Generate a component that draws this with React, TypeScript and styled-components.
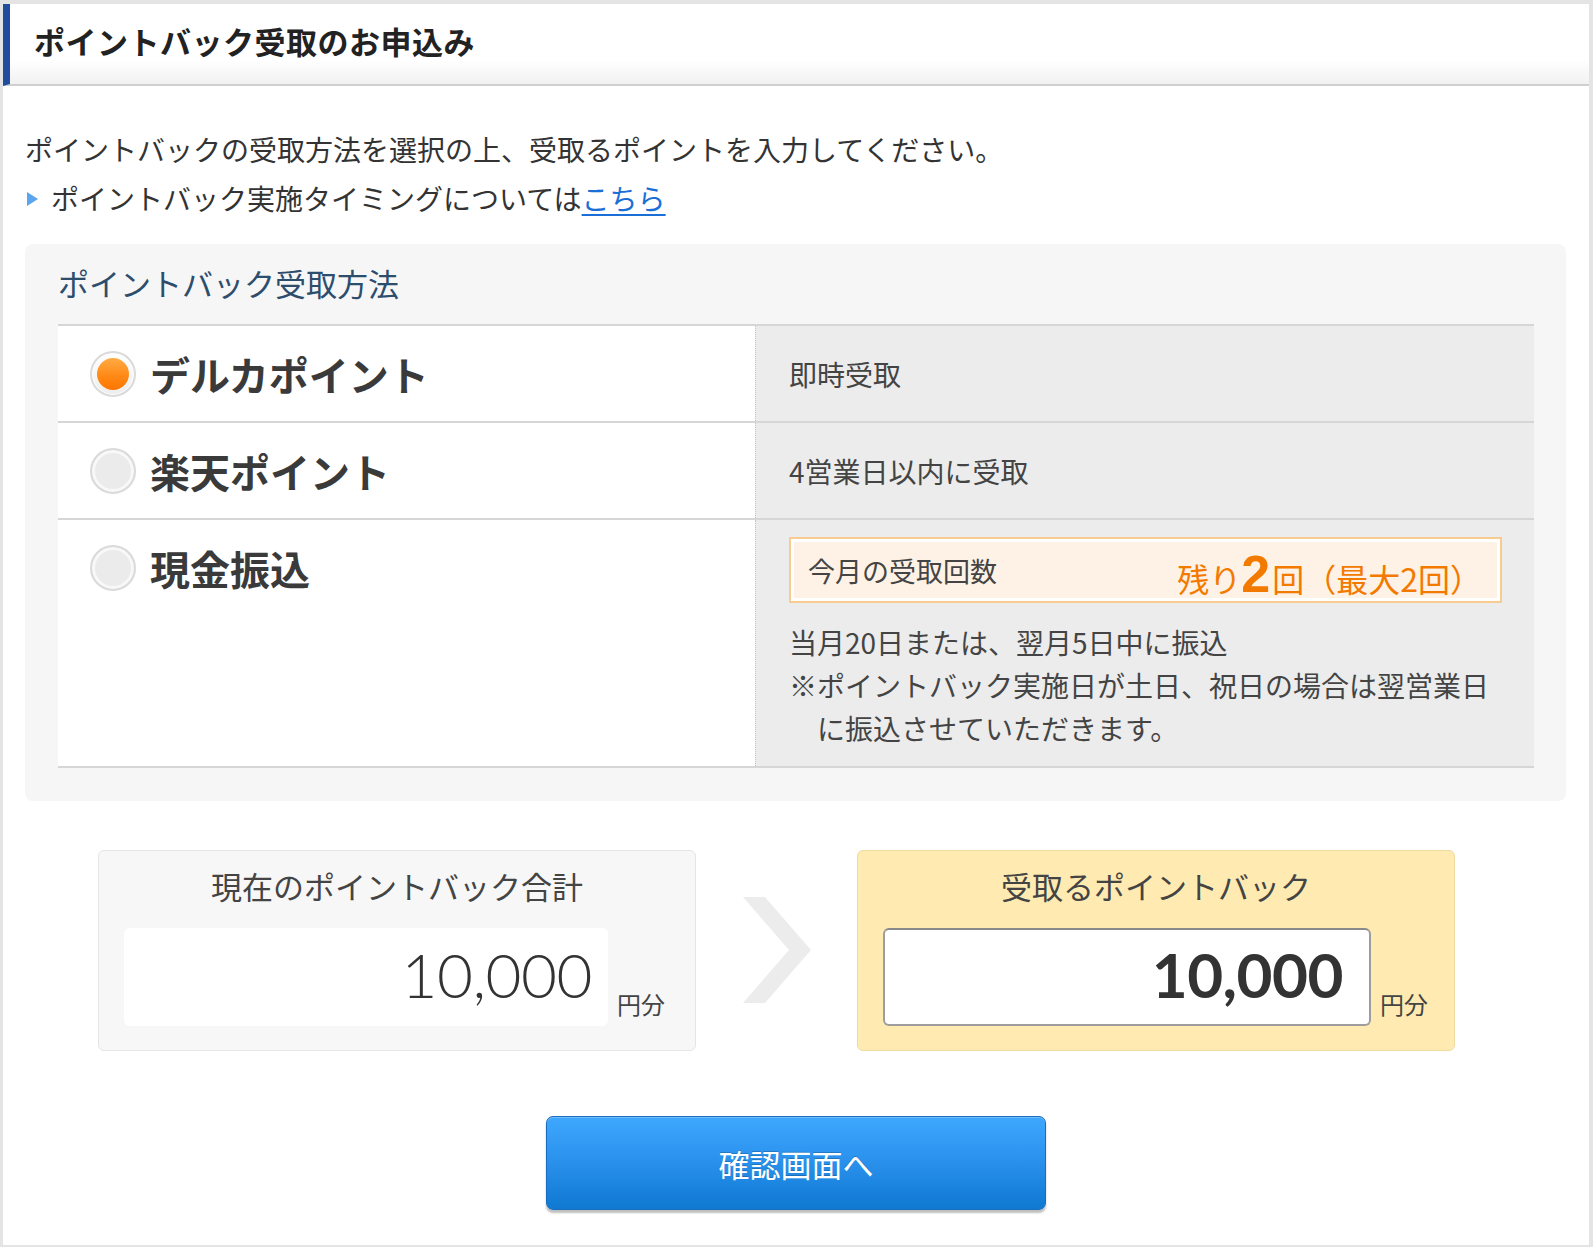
import React from 'react';
import styled, { createGlobalStyle } from 'styled-components';

const GlobalStyle = createGlobalStyle`
  html, body {
    margin: 0;
    padding: 0;
    background: #fff;
  }
  body {
    font-family: 'Noto Sans CJK JP', 'Noto Sans', sans-serif;
    color: #333;
  }
  * {
    box-sizing: border-box;
  }
`;

const methods = [
  { id: 'delca', label: 'デルカポイント', note: '即時受取', checked: true },
  { id: 'rakuten', label: '楽天ポイント', note: '4営業日以内に受取', checked: false },
];

const App: React.FC = () => {
  return (
    <>
      <GlobalStyle />
      <Frame>
        <Header>
          <Title>ポイントバック受取のお申込み</Title>
        </Header>

        <Body>
          <Intro>ポイントバックの受取方法を選択の上、受取るポイントを入力してください。</Intro>
          <Intro>
            <Bullet />
            ポイントバック実施タイミングについては<TextLink href="#">こちら</TextLink>
          </Intro>

          <Panel>
            <PanelTitle>ポイントバック受取方法</PanelTitle>
            <MethodTable>
              {methods.map((m) => (
                <MethodRow key={m.id}>
                  <MethodCell>
                    <Radio checked={m.checked} />
                    <MethodName>{m.label}</MethodName>
                  </MethodCell>
                  <NoteCell $center>{m.note}</NoteCell>
                </MethodRow>
              ))}
              <MethodRow>
                <MethodCell>
                  <Radio checked={false} />
                  <MethodName>現金振込</MethodName>
                </MethodCell>
                <NoteCell>
                  <CountBox>
                    <CountLabel>今月の受取回数</CountLabel>
                    <CountValue>
                      残り<BigNum>2</BigNum>回（最大2回）
                    </CountValue>
                  </CountBox>
                  <NoteText>当月20日または、翌月5日中に振込</NoteText>
                  <NoteText $hanging>
                    ※ポイントバック実施日が土日、祝日の場合は翌営業日
                    <br />
                    に振込させていただきます。
                  </NoteText>
                </NoteCell>
              </MethodRow>
            </MethodTable>
          </Panel>

          <AmountRow>
            <AmountBox $variant="current">
              <AmountTitle>現在のポイントバック合計</AmountTitle>
              <AmountLine>
                <AmountField $variant="current">10,000</AmountField>
                <Unit>円分</Unit>
              </AmountLine>
            </AmountBox>

            <Arrow>
              <svg width="68" height="106" viewBox="0 0 68 106">
                <polygon points="0,0 22,0 68,53 22,106 0,106 46,53" fill="#ececec" />
              </svg>
            </Arrow>

            <AmountBox $variant="receive">
              <AmountTitle>受取るポイントバック</AmountTitle>
              <AmountLine>
                <AmountField $variant="receive">10,000</AmountField>
                <Unit>円分</Unit>
              </AmountLine>
            </AmountBox>
          </AmountRow>

          <ButtonRow>
            <SubmitButton type="button">確認画面へ</SubmitButton>
          </ButtonRow>
        </Body>
      </Frame>
    </>
  );
};

export default App;

const Radio: React.FC<{ checked: boolean }> = ({ checked }) => (
  <RadioOuter $checked={checked}>{checked && <RadioDot />}</RadioOuter>
);

// Styled Components
const Frame = styled.div`
  width: 1593px;
  min-height: 1247px;
  border: 4px solid #e4e4e4;
  border-left-width: 3px;
  background: #fff;
`;

const Header = styled.div`
  height: 82px;
  display: flex;
  align-items: center;
  padding: 0 0 7px 24px;
  border-left: 7px solid #214d9e;
  border-bottom: 2px solid #cfcfcf;
  background: linear-gradient(to bottom, #fff 0%, #fff 70%, #f1f1f1 100%);
`;

const Title = styled.h1`
  margin: 0;
  font-size: 31px;
  font-weight: 700;
  color: #222;
  letter-spacing: 0.5px;
`;

const Body = styled.div`
  padding: 39px 23px 0 22px;
`;

const Intro = styled.p`
  margin: 0;
  display: flex;
  align-items: center;
  font-size: 28px;
  line-height: 49px;
  color: #333;
`;

const Bullet = styled.span`
  display: inline-block;
  width: 0;
  height: 0;
  margin: 0 13px 0 2px;
  border-left: 11px solid #5ba4ee;
  border-top: 7px solid transparent;
  border-bottom: 7px solid transparent;
`;

const TextLink = styled.a`
  color: #1a6fd6;
  text-decoration: underline;
  text-underline-offset: 4px;
`;

const Panel = styled.div`
  margin-top: 21px;
  background: #f6f6f6;
  border-radius: 8px;
  padding: 0 32px 33px 33px;
`;

const PanelTitle = styled.h2`
  margin: 0;
  height: 80px;
  display: flex;
  align-items: center;
  padding-bottom: 4px;
  font-size: 31px;
  font-weight: 400;
  color: #2d4d6d;
`;

const MethodTable = styled.div`
  border-top: 2px solid #d6d6d6;
`;

const MethodRow = styled.div`
  display: grid;
  grid-template-columns: 697px 1fr;
  border-bottom: 2px solid #d6d6d6;
`;

const MethodCell = styled.div`
  display: flex;
  align-items: flex-start;
  gap: 14px;
  padding: 25px 0 24px 32px;
  background: #fff;
`;

const RadioOuter = styled.span<{ $checked: boolean }>`
  flex: none;
  width: 46px;
  height: 46px;
  border-radius: 50%;
  display: flex;
  align-items: center;
  justify-content: center;
  border: 2px solid #dadada;
  background: ${(p) =>
    p.$checked ? 'linear-gradient(to bottom, #ffffff, #ededed)' : '#ebebeb'};
  box-shadow: ${(p) =>
    p.$checked ? 'inset 0 0 0 1px #fff' : 'inset 0 0 0 3px #f8f8f8'};
`;

const RadioDot = styled.span`
  width: 32px;
  height: 32px;
  border-radius: 50%;
  background: linear-gradient(to bottom, #ffab45 0%, #ff8a16 55%, #ff7400 100%);
`;

const MethodName = styled.span`
  font-size: 40px;
  line-height: 46px;
  font-weight: 700;
  color: #3a3a3a;
`;

const NoteCell = styled.div<{ $center?: boolean }>`
  display: flex;
  flex-direction: column;
  justify-content: ${(p) => (p.$center ? 'center' : 'flex-start')};
  padding: ${(p) => (p.$center ? '0 32px 0 33px' : '17px 32px 16px 33px')};
  background: #ececec;
  border-left: 1px dotted #c4c4c4;
  font-size: 28px;
  color: #444;
`;

const CountBox = styled.div`
  height: 66px;
  display: flex;
  align-items: center;
  justify-content: space-between;
  padding: 0 18px 0 17px;
  border: 2px solid #f8cb8e;
  box-shadow: inset 0 0 0 3px #fff;
  background: #fef2e6;
  margin-bottom: 18px;
`;

const CountLabel = styled.span`
  font-size: 27px;
  color: #444;
`;

const CountValue = styled.span`
  font-size: 32px;
  color: #f37a00;
  line-height: 1;
  display: flex;
  align-items: baseline;
  padding-top: 8px;
`;

const BigNum = styled.span`
  font-family: 'Liberation Sans', Arial, sans-serif;
  font-size: 52px;
  font-weight: 700;
  margin: 0 2px 0 0;
`;

const NoteText = styled.p<{ $hanging?: boolean }>`
  margin: 0;
  font-size: 28px;
  line-height: 43px;
  color: #444;
  padding-left: ${(p) => (p.$hanging ? '1em' : '0')};
  text-indent: ${(p) => (p.$hanging ? '-1em' : '0')};
`;

const AmountRow = styled.div`
  display: flex;
  align-items: stretch;
  margin-top: 49px;
  padding-left: 73px;
`;

const AmountBox = styled.div<{ $variant: 'current' | 'receive' }>`
  width: 598px;
  height: 201px;
  border-radius: 6px;
  padding: 15px 0 0 25px;
  border: 1px solid ${(p) => (p.$variant === 'receive' ? '#eedb9f' : '#e5e5e5')};
  background: ${(p) => (p.$variant === 'receive' ? '#ffebb1' : '#f7f7f7')};
`;

const AmountTitle = styled.div`
  height: 40px;
  line-height: 40px;
  text-align: center;
  padding-right: 25px;
  font-size: 31px;
  color: #444;
`;

const AmountLine = styled.div`
  display: flex;
  align-items: flex-end;
  gap: 9px;
  margin-top: 22px;
`;

const AmountField = styled.div<{ $variant: 'current' | 'receive' }>`
  width: ${(p) => (p.$variant === 'receive' ? '488px' : '484px')};
  height: 98px;
  border-radius: 6px;
  background: #fff;
  display: flex;
  align-items: center;
  justify-content: flex-end;
  font-family: Lato, 'Liberation Sans', sans-serif;
  font-size: 62px;
  color: #333;
  font-weight: ${(p) => (p.$variant === 'receive' ? 700 : 300)};
  padding-right: ${(p) => (p.$variant === 'receive' ? '26px' : '16px')};
  padding-bottom: 7px;
  border: ${(p) => (p.$variant === 'receive' ? '2px solid #9d9d9d' : 'none')};
  border-top-color: ${(p) => (p.$variant === 'receive' ? '#8a8a8a' : 'transparent')};
  letter-spacing: -0.5px;
`;

const Unit = styled.span`
  font-size: 24px;
  line-height: 1;
  color: #444;
  padding-bottom: 10px;
`;

const Arrow = styled.div`
  width: 161px;
  display: flex;
  align-items: center;
  justify-content: center;
  padding-bottom: 2px;
`;

const ButtonRow = styled.div`
  display: flex;
  justify-content: center;
  margin-top: 65px;
  margin-left: -22px;
  margin-right: -23px;
  padding-bottom: 35px;
`;

const SubmitButton = styled.button`
  width: 500px;
  height: 94px;
  border-radius: 7px;
  border: 1px solid #1a6cbd;
  background: linear-gradient(to bottom, #3ea7fd 0%, #2b93ee 45%, #0f78d1 100%);
  box-shadow: 0 3px 2px rgba(0, 0, 0, 0.25), inset 0 1px 0 rgba(255, 255, 255, 0.25);
  color: #fff;
  font-family: 'Noto Sans CJK JP', sans-serif;
  font-size: 31px;
  text-shadow: 0 -1px 0 rgba(0, 0, 0, 0.2);
  cursor: pointer;
`;
